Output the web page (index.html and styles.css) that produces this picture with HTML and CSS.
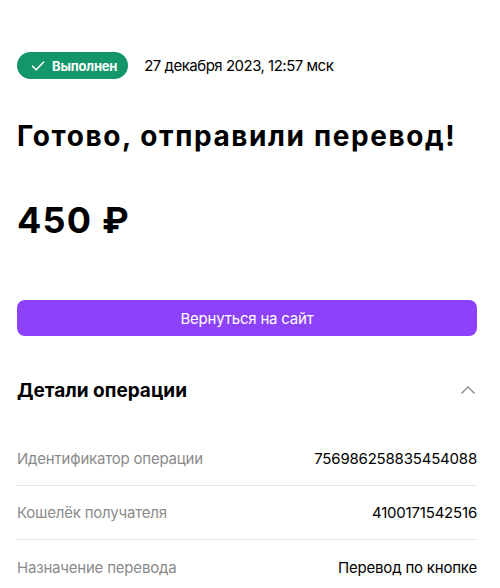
FILE: index.html
```html
<!DOCTYPE html>
<html lang="ru">
<head>
<meta charset="utf-8">
<link rel="stylesheet" href="styles.css">
</head>
<body>
<main class="page">
  <div class="status">
    <span class="badge">
      <svg class="badge-icon" width="14" height="12" viewBox="0 0 14 12"><path d="M1.5 6.2 L5.2 9.8 L12.5 2.2" fill="none" stroke="#fff" stroke-width="1.6" stroke-linecap="round" stroke-linejoin="round"/></svg>
      Выполнен
    </span>
    <span class="date">27 декабря 2023, 12:57 мск</span>
  </div>
  <h1 class="title">Готово, отправили перевод!</h1>
  <div class="amount">450 ₽</div>
  <button class="back">Вернуться на сайт</button>
  <section class="details">
    <div class="details-head">
      <h2 class="details-title">Детали операции</h2>
      <svg class="chevron" width="16" height="10" viewBox="0 0 16 10"><path d="M1.5 8.5 L8 2 L14.5 8.5" fill="none" stroke="#8a8a8a" stroke-width="1.4"/></svg>
    </div>
    <div class="row"><span class="label">Идентификатор операции</span><span class="value">756986258835454088</span></div>
    <div class="row"><span class="label">Кошелёк получателя</span><span class="value">4100171542516</span></div>
    <div class="row"><span class="label">Назначение перевода</span><span class="value">Перевод по кнопке</span></div>
  </section>
</main>
</body>
</html>
```

FILE: styles.css
```css
* { box-sizing: border-box; }
html, body { margin: 0; padding: 0; background: #fff; }
body { font-family: Inter, "Noto Sans", sans-serif; color: #000; }
.page { padding: 52px 23px 0 17px; }
.status { display: flex; align-items: center; gap: 16px; height: 27px; }
.badge {
  display: inline-flex; align-items: center; gap: 7px;
  height: 27px; padding: 0 11px 0 14px;
  background: #12966a; color: #fff; border-radius: 14px;
  font-size: 13px; font-weight: 700; letter-spacing: -0.2px;
}
.badge-icon { display: block; }
.date { font-size: 15px; letter-spacing: -0.5px; }
.title { margin: 40px 0 0; font-size: 28px; font-weight: 700; line-height: 34px; letter-spacing: 1.6px; }
.amount { margin-top: 45px; font-size: 36px; font-weight: 700; line-height: 44px; letter-spacing: 1.2px; }
.back {
  display: block; width: 100%; height: 36px; margin-top: 58px;
  border: 0; border-radius: 8px; background: #8c41fb; color: #fff;
  font-family: inherit; font-size: 15px; letter-spacing: -0.2px;
}
.details { margin-top: 40px; }
.details-head { display: flex; align-items: center; justify-content: space-between; height: 28px; }
.details-title { margin: 0; font-size: 19px; font-weight: 700; }
.chevron { margin-right: 1px; }
.row {
  display: flex; justify-content: space-between; align-items: center;
  height: 54px; border-bottom: 1px solid #e6e6e6; font-size: 15px; letter-spacing: -0.2px;
}
.details-head + .row { margin-top: 28px; }
.row:last-child { border-bottom: 0; }
.label { color: #8a8a8a; }
.value { color: #000; }
```
